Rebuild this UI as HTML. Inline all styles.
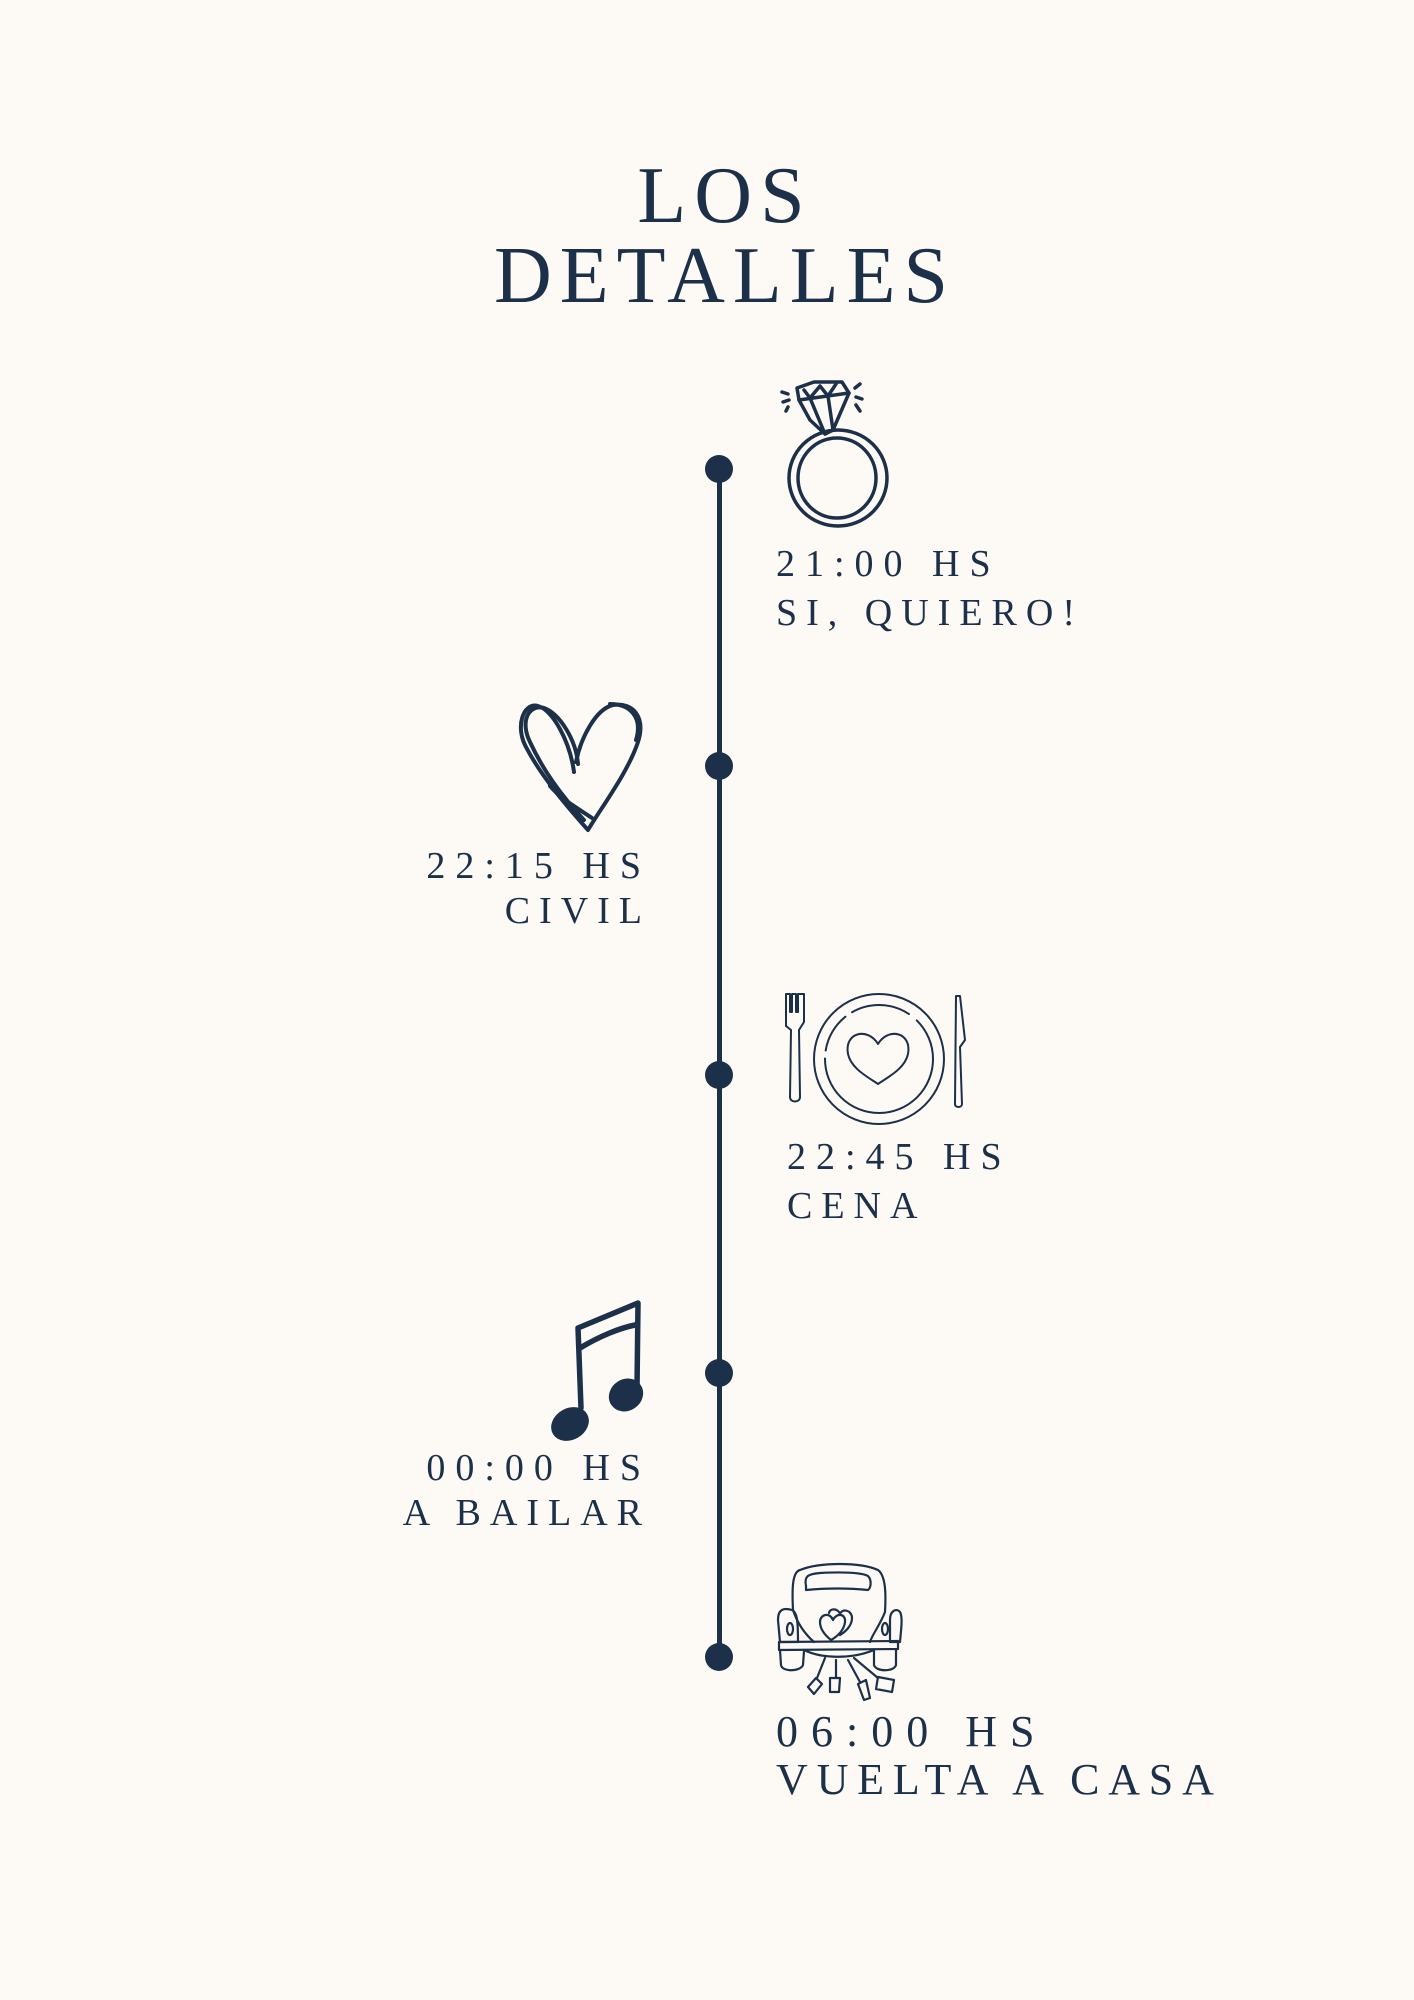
<!DOCTYPE html>
<html><head><meta charset="utf-8"><style>
html,body{margin:0;padding:0}
body{width:1414px;height:2000px;background:#fdfaf5;position:relative;overflow:hidden;font-family:"Liberation Serif",serif;color:#1c3049}
.t{position:absolute;white-space:nowrap;line-height:1}
.title{position:absolute;left:0;width:1414px;text-align:center;font-size:80px;line-height:80px;letter-spacing:8px}
.s{font-size:38px;letter-spacing:9px}
svg{position:absolute;overflow:visible}
</style></head><body>
<div class="title" style="top:156px;left:18px">LOS<br>DETALLES</div>

<div style="position:absolute;left:717px;top:469px;width:5px;height:1188px;background:#1c3049"></div>
<div style="position:absolute;left:705px;top:455px;width:28px;height:28px;border-radius:50%;background:#1c3049"></div>
<div style="position:absolute;left:705px;top:752px;width:28px;height:28px;border-radius:50%;background:#1c3049"></div>
<div style="position:absolute;left:705px;top:1061px;width:28px;height:28px;border-radius:50%;background:#1c3049"></div>
<div style="position:absolute;left:705px;top:1359px;width:28px;height:28px;border-radius:50%;background:#1c3049"></div>
<div style="position:absolute;left:705px;top:1643px;width:28px;height:28px;border-radius:50%;background:#1c3049"></div>

<div class="t s" style="left:776px;top:545px;letter-spacing:10px">21:00 HS</div>
<div class="t s" style="left:776px;top:594px">SI, QUIERO!</div>
<div class="t s" style="right:763px;top:847px;text-align:right;letter-spacing:10px">22:15 HS</div>
<div class="t s" style="right:763px;top:892px;text-align:right">CIVIL</div>
<div class="t s" style="left:787px;top:1138px;letter-spacing:10px">22:45 HS</div>
<div class="t s" style="left:787px;top:1187px">CENA</div>
<div class="t s" style="right:763px;top:1449px;text-align:right;letter-spacing:10px">00:00 HS</div>
<div class="t s" style="right:763px;top:1494px;text-align:right">A BAILAR</div>
<div class="t" style="left:776px;top:1710px;font-size:44px;letter-spacing:13px">06:00 HS</div>
<div class="t" style="left:776px;top:1758px;font-size:44px;letter-spacing:8.8px">VUELTA A CASA</div>

<!-- ring -->
<svg style="left:780px;top:380px" width="110" height="148" viewBox="0 0 110 148" fill="none" stroke="#1c3049" stroke-width="3.5" stroke-linecap="round" stroke-linejoin="round">
<path d="M17 8 L34 2 L62 2 L69 13 L53 50 L45 54 L30 40 L19 20 Z"/>
<path d="M19 20 L69 13 M24 10 L30 18 L40 6 L48 16 L56 4 M30 18 L45 54 M48 16 L53 50"/>
<path d="M2 12 L8 14 M3 22 L9 20 M6 31 L8 27 M80 4 L75 8 M82 19 L76 17 M80 31 L76 25"/>
<ellipse cx="58" cy="98" rx="49" ry="48"/>
<ellipse cx="57" cy="98" rx="39" ry="40"/>
</svg>

<!-- heart -->
<svg style="left:518px;top:702px" width="126" height="129" viewBox="0 0 126 129" fill="none" stroke="#1c3049" stroke-width="4" stroke-linecap="round" stroke-linejoin="round">
<path d="M56 70 C52 40 35 8 20 4 C5 0 -3 25 8 45 C22 72 45 100 70 128 C85 103 110 70 120 40 C128 15 115 0 95 3 C78 7 63 35 58 60"/>
<path d="M60 62 C58 38 42 12 26 6 C10 2 2 20 12 40 C25 68 42 92 66 118 M74 116 C56 104 42 96 32 84 M92 2 C112 2 125 15 118 38"/>
</svg>

<!-- plate -->
<svg style="left:784px;top:994px" width="188" height="131" viewBox="0 0 188 131" fill="none" stroke="#1c3049" stroke-width="2" stroke-linecap="round" stroke-linejoin="round">
<path d="M2 32 L2 0 L6 0 L6 18 L8 18 L8 0 L12 0 L12 18 L14 18 L14 0 L20 0 L20 28 L15 36 L16 103 C16 109 6 109 6 103 L7 36 L2 32"/>
<circle cx="95" cy="65" r="65"/>
<circle cx="95" cy="65" r="54" stroke-dasharray="170 8 40 8 60 10 200"/>
<path d="M94 50 C84 33 60 38 64 60 C67 74 82 82 94 90 C106 82 121 74 124 60 C128 38 104 33 94 50Z"/>
<path d="M176 2 L172 2 L171 110 C171 114 178 114 178 110 L176 53 L181 46 Z"/>
</svg>

<!-- music note -->
<svg style="left:550px;top:1303px" width="94" height="139" viewBox="0 0 94 139" fill="none" stroke="#1c3049" stroke-width="5.5" stroke-linecap="round" stroke-linejoin="round">
<path d="M31 105 L28 25 L88 0 L87 85"/>
<path d="M30 45 C50 33 70 25 85 22"/>
<ellipse cx="20" cy="121" rx="17" ry="13" transform="rotate(-30 20 121)" fill="#1c3049"/>
<ellipse cx="76" cy="92" rx="15" ry="13" transform="rotate(-35 76 92)" fill="#1c3049"/>
</svg>

<!-- car -->
<svg style="left:770px;top:1550px" width="150" height="160" viewBox="0 0 150 160" fill="none" stroke="#1c3049" stroke-width="2.2" stroke-linecap="round" stroke-linejoin="round">
<path d="M23 60 C22 40 22 22 30 20 C50 12 90 12 108 20 C116 26 116 45 115 62 C110 75 102 85 100 92"/>
<path d="M36 36 C34 26 38 24 50 23 C70 22 90 22 98 26 C102 30 101 38 98 40 C80 38 55 38 36 40 Z"/>
<path d="M23 60 C28 75 36 85 44 92"/>
<path d="M10 92 L8 70 C8 58 15 58 22 60 C27 62 28 70 28 92 Z"/>
<path d="M120 92 L120 70 C120 60 127 58 130 62 C133 67 131 80 130 92 Z"/>
<ellipse cx="20" cy="79" rx="3" ry="6"/><ellipse cx="115" cy="79" rx="3" ry="6"/>
<path d="M9 92 L128 91 L128 99 L9 100 Z"/>
<path d="M10 100 L11 115 C12 122 30 122 33 115 L34 101 M104 100 L104 115 C106 122 124 122 126 115 L126 100"/>
<path d="M34 100 C50 108 80 110 104 100"/>
<path d="M61 90 C56 86 50 80 50 72 C50 64 60 62 63 70 C67 62 76 64 75 72 C74 80 68 86 61 90Z"/>
<path d="M70 85 C75 82 82 76 82 68 C82 60 72 58 70 64 C68 58 60 58 59 63"/>
<path d="M55 108 L47 128 M66 110 L66 128 M78 110 L90 132 M84 108 L108 128"/>
<path d="M38 137 L46 128 L52 134 L44 144 Z M60 128 L70 128 L69 142 L60 142 Z M88 134 L96 130 L100 148 L94 150 Z M108 127 L124 130 L122 142 L106 139 Z"/>
</svg>
</body></html>
